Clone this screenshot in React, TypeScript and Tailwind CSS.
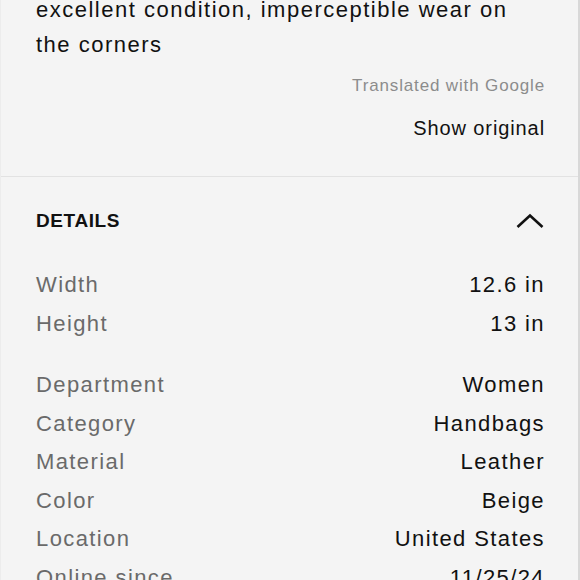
import React from "react";

const group1 = [
  ["Width", "12.6 in"],
  ["Height", "13 in"],
];
const group2 = [
  ["Department", "Women"],
  ["Category", "Handbags"],
  ["Material", "Leather"],
  ["Color", "Beige"],
  ["Location", "United States"],
  ["Online since", "11/25/24"],
];

function Row({ label, value }: { label: string; value: string }) {
  return (
    <div className="flex justify-between text-[22px] leading-[38.5px] tracking-[1.4px]">
      <span className="text-[#6a6a6a]">{label}</span>
      <span className="text-[#111111]">{value}</span>
    </div>
  );
}

export default function App() {
  return (
    <div
      className="w-[580px] h-[580px] overflow-hidden bg-[#f4f4f4] border-l border-l-[#ececec] border-r-2 border-r-[#d8d8d8]"
      style={{ fontFamily: '"Liberation Sans", Arial, sans-serif' }}
    >
      <div className="pl-[35px] pr-[33px] pb-[34px]">
        <p className="-mt-[8px] text-[22px] leading-[35px] tracking-[1.5px] text-[#111111]">
          excellent condition, imperceptible wear on
          <br />
          the corners
        </p>
        <div className="mt-[12px] text-right text-[17px] leading-[24px] tracking-[0.85px] text-[#8c8c8c]">
          Translated with Google
        </div>
        <div className="mt-[16px] text-right text-[20px] leading-[28px] tracking-[0.9px] text-[#111111]">
          Show original
        </div>
      </div>
      <div className="h-px bg-[#e2e2e2]" />
      <div className="pl-[35px] pr-[33px] pt-[30px]">
        <div className="flex items-center justify-between h-[28px]">
          <span className="text-[19px] font-bold leading-[28px] tracking-[0.6px] text-[#111111]">
            DETAILS
          </span>
          <svg width="28" height="16" viewBox="0 0 28 16" className="mr-[1px]">
            <polyline
              points="1.5,14 14,2.5 26.5,14"
              fill="none"
              stroke="#111111"
              strokeWidth="2.6"
            />
          </svg>
        </div>
        <div className="mt-[31px]">
          {group1.map(([l, v]) => (
            <Row key={l} label={l} value={v} />
          ))}
        </div>
        <div className="mt-[23px]">
          {group2.map(([l, v]) => (
            <Row key={l} label={l} value={v} />
          ))}
        </div>
      </div>
    </div>
  );
}
